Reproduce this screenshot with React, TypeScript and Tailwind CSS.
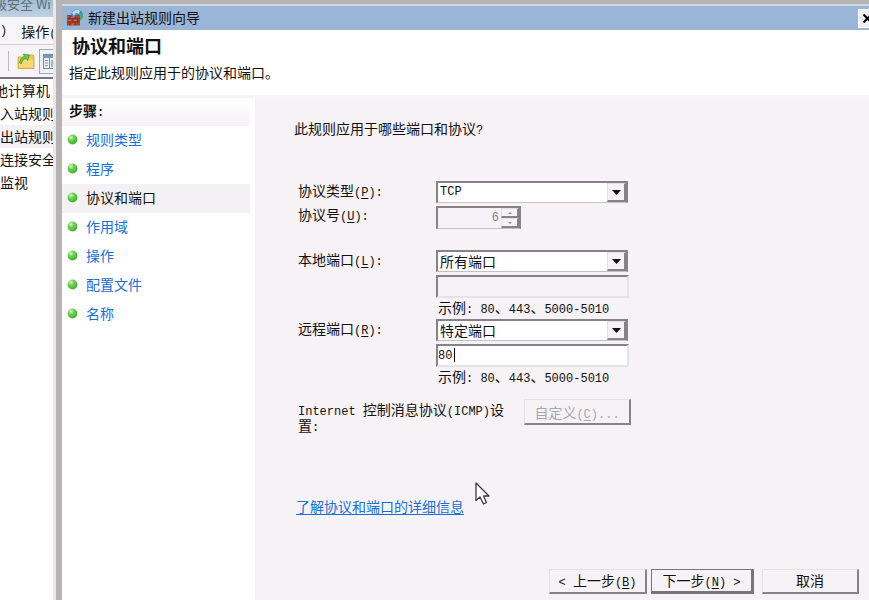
import React from 'react';

function Mono({ children }: { children: React.ReactNode }) {
  return (
    <span className="font-['Liberation_Mono','Noto_Sans_CJK_SC',monospace] text-xs leading-none whitespace-pre">
      {children}
    </span>
  );
}

function Hotkey({ letter, suffix = '' }: { letter: string; suffix?: string }) {
  return (
    <Mono>
      (<u className="underline-offset-2">{letter}</u>){suffix}
    </Mono>
  );
}

const SUNKEN =
  'border-2 border-t-[#858387] border-l-[#858387] border-r-[#e6e2e6] border-b-[#e6e2e6] rounded-none outline-none';
const RAISED =
  'border-t border-l border-r-2 border-b-2 border-t-[#e4e1e4] border-l-[#e4e1e4] border-r-[#858387] border-b-[#858387]';

function Bullet() {
  return (
    <svg width="11" height="11" viewBox="0 0 11 11" aria-hidden="true">
      <defs>
        <radialGradient id="bullet" cx="0.35" cy="0.28" r="0.75">
          <stop offset="0" stopColor="#d8f5cd" />
          <stop offset="0.4" stopColor="#6fd152" />
          <stop offset="1" stopColor="#3fae2c" />
        </radialGradient>
      </defs>
      <circle cx="5.5" cy="5.5" r="4.9" fill="url(#bullet)" />
    </svg>
  );
}

function FirewallIcon() {
  return (
    <svg width="18" height="18" viewBox="0 0 18 18" aria-hidden="true">
      <circle cx="11" cy="6.5" r="6" fill="#3f86cf" />
      <path d="M6 4 C8 0.5 12 0 14 2 L13 5 L10 4 L8 7 Z" fill="#a9e0f2" />
      <path d="M13 4 L16.500 4.500 L16.500 9 L14 11 L12 8 Z" fill="#44b556" />
      <path d="M1 6 H6 V8 H9 V6 H14 V16.500 H1 Z" fill="#b5402e" />
      <path
        d="M1 9.500 H14 M1 13 H14 M4 6 V9.500 M9.500 8 V9.500 M6.500 9.500 V13 M11.500 9.500 V13 M4 13 V16.500 M9 13 V16.500"
        stroke="#70302a"
        strokeWidth="0.8"
        fill="none"
      />
      <path d="M1.500 8 H3 M5 8.500 H8 M2 11.500 H5 M8 11.500 H10.500 M5.500 15 H8" stroke="#d9684d" strokeWidth="1" />
    </svg>
  );
}

function FolderUpIcon() {
  return (
    <svg width="18" height="18" viewBox="0 0 18 18" aria-hidden="true">
      <path d="M1 5 H10 L11.500 3 H16 L17 4 V16.500 H1 Z" fill="#efcb58" stroke="#c9a23a" strokeWidth="0.8" />
      <path d="M2 8 H16 V15.500 H2 Z" fill="#f6da78" />
      <path
        d="M2.500 11 C3 7.500 5 5 7.500 4.500 L6.500 2 L12.500 3 L10.500 8.500 L9 6.500 C6.500 7 5 8.500 4.500 11.500 Z"
        fill="#6cc648"
        stroke="#3f9a26"
        strokeWidth="0.7"
      />
    </svg>
  );
}

function PaneIcon() {
  return (
    <svg width="16" height="17" viewBox="0 0 16 17" aria-hidden="true">
      <rect x="0.5" y="1.500" width="15" height="14" fill="#eef3f8" stroke="#7288a3" />
      <rect x="1" y="2" width="14" height="3" fill="#7f98b6" />
      <path d="M6.500 5 V15" stroke="#7288a3" />
      <path d="M2 7.500 H5 M2 10 H5 M2 12.500 H5" stroke="#7193bd" />
      <rect x="8" y="7" width="6" height="7" fill="#9db7d3" />
    </svg>
  );
}

function ConsoleWindow() {
  const nodes = ['入站规则', '出站规则', '连接安全', '监视'];
  return (
    <section className="flex w-[56px] shrink-0 flex-col overflow-hidden border-r-3 border-[#e9e7e9] bg-white whitespace-nowrap">
      <div className="h-[17px] shrink-0 overflow-hidden bg-linear-to-b from-[#a3bdd2] to-[#bfd2e0]">
        <p className="-ml-1.5 -mt-1 text-[13px] leading-4 text-[#5d6e7d]">级安全 Wi</p>
      </div>
      <nav className="flex h-7 shrink-0 items-center gap-3.5 border-b border-[#cfcbcf] bg-[#f8f5f8]">
        <Mono>)</Mono>
        <button type="button" className="shrink-0">
          操作<Mono>(</Mono>
        </button>
      </nav>
      <div className="flex h-[34px] shrink-0 items-center border-b-2 border-[#77757a] bg-[#f7f4f7]">
        <span className="ml-2 h-5 w-px shrink-0 bg-[#bdb9bd]" />
        <button type="button" aria-label="向上" className="ml-2 shrink-0">
          <FolderUpIcon />
        </button>
        <button type="button" aria-label="显示窗格" className="ml-1 shrink-0 border border-[#a5a9b2] bg-[#eef1f6] p-[3px]">
          <PaneIcon />
        </button>
      </div>
      <ul className="leading-[23px]">
        <li className="-ml-1.5">
          地计算机<span className="ml-[3px]">上</span>
        </li>
        {nodes.map((node) => (
          <li key={node} className={node === '出站规则' ? 'bg-[#f4f1f4]' : ''}>
            {node}
          </li>
        ))}
      </ul>
    </section>
  );
}

const STEPS = ['规则类型', '程序', '协议和端口', '作用域', '操作', '配置文件', '名称'];

function StepList() {
  return (
    <aside className="w-[193px] shrink-0 bg-white pr-[5px]">
      <h2 className="h-7 bg-linear-to-b from-white to-[#f5f2f5] pl-[7px] font-bold leading-6">
        步骤<Mono>:</Mono>
      </h2>
      <ol>
        {STEPS.map((step) => {
          const current = step === '协议和端口';
          return (
            <li
              key={step}
              className={`flex h-[29px] items-start gap-2 pl-[5px] leading-[26px] ${current ? 'bg-[#f4f1f4]' : ''}`}
            >
              <span className="pt-2">
                <Bullet />
              </span>
              {current ? (
                <span aria-current="step">{step}</span>
              ) : (
                <a href="#step" className="text-[#1670d8]">
                  {step}
                </a>
              )}
            </li>
          );
        })}
      </ol>
    </aside>
  );
}

function DropDown({ id, value, latin = false }: { id: string; value: string; latin?: boolean }) {
  return (
    <div className="relative h-[22px] w-48 border-2 border-b border-[#858387] border-b-[#c4c1c4] bg-white">
      <select
        id={id}
        defaultValue={value}
        className={`block h-[18px] w-full appearance-none bg-transparent pl-0.5 leading-[18px] outline-none ${
          latin ? "font-['Liberation_Mono',monospace] text-xs" : 'text-sm'
        }`}
      >
        <option>{value}</option>
      </select>
      <span
        className={`pointer-events-none absolute inset-y-0 right-0 flex w-[19px] items-center justify-center bg-[#f6f3f6] ${RAISED}`}
      >
        <svg width="9" height="5" viewBox="0 0 9 5" aria-hidden="true">
          <path d="M0 0 H9 L4.500 5 Z" fill="#111" />
        </svg>
      </span>
    </div>
  );
}

function PortGroup({
  id,
  name,
  letter,
  choice,
  ports,
}: {
  id: string;
  name: string;
  letter: string;
  choice: string;
  ports?: string;
}) {
  return (
    <div className="flex">
      <label htmlFor={id} className="w-[138px] shrink-0 leading-[18px]">
        {name}
        <Hotkey letter={letter} suffix=":" />
      </label>
      <div>
        <DropDown id={id} value={choice} />
        <div className="relative mt-[3px]">
          <input
            type="text"
            aria-label={`${name}列表`}
            defaultValue={ports}
            disabled={!ports}
            className={`block h-[23px] w-[193px] font-['Liberation_Mono',monospace] text-xs ${SUNKEN} ${
              ports ? 'bg-white' : 'bg-[#f6f2f6]'
            }`}
          />
          {ports && <span className="absolute left-[18px] top-1 h-3.5 w-px bg-black" />}
        </div>
        <p className="h-[21px] pl-0.5 leading-[18px] whitespace-nowrap">
          示例<Mono>: 80</Mono>、<Mono>443</Mono>、<Mono>5000-5010</Mono>
        </p>
      </div>
    </div>
  );
}

function SpinArrow({ up = false }: { up?: boolean }) {
  return (
    <button
      type="button"
      disabled
      aria-label={up ? '增加' : '减少'}
      className={`flex flex-1 items-center justify-center ${RAISED}`}
    >
      <svg width="4" height="2" viewBox="0 0 4 2" aria-hidden="true">
        <path d={up ? 'M0 2 H4 L2 0 Z' : 'M0 0 H4 L2 2 Z'} fill="#8f8c90" />
      </svg>
    </button>
  );
}

function Page() {
  return (
    <main className="flex min-w-0 flex-1 flex-col bg-[#f6f2f6] pl-[39px]">
      <p className="mt-5 leading-5">
        此规则应用于哪些端口和协议<Mono>?</Mono>
      </p>
      <form className="mt-[43px] pl-1">
        <div className="flex">
          <label htmlFor="protocol" className="w-[138px] shrink-0 leading-[18px]">
            协议类型
            <Hotkey letter="P" suffix=":" />
          </label>
          <DropDown id="protocol" value="TCP" latin />
        </div>
        <div className="mt-[3px] flex">
          <label htmlFor="number" className="w-[138px] shrink-0 leading-4">
            协议号
            <Hotkey letter="U" suffix=":" />
          </label>
          <div className="flex h-[23px] w-[85px] border-2 border-b border-[#858387] border-b-[#c4c1c4]">
            <input
              id="number"
              type="number"
              defaultValue={6}
              disabled
              className="min-w-0 flex-1 appearance-none pr-0.5 text-right font-['Liberation_Mono',monospace] text-xs text-[#858286] [appearance:textfield] [&::-webkit-inner-spin-button]:appearance-none"
            />
            <div className="flex w-[18px] flex-col">
              <SpinArrow up />
              <SpinArrow />
            </div>
          </div>
        </div>
        <div className="mt-[21px]">
          <PortGroup id="local" name="本地端口" letter="L" choice="所有端口" />
          <PortGroup id="remote" name="远程端口" letter="R" choice="特定端口" ports="80" />
        </div>
        <div className="mt-[11px] flex">
          <p className="mr-[18px] w-52 shrink-0 pt-[3px] leading-3.5">
            <Mono>Internet </Mono>控制消息协议<Mono>(ICMP)</Mono>设置<Mono>:</Mono>
          </p>
          <button type="button" disabled className={`h-[26px] w-[107px] leading-5 text-[#aaa7ab] ${RAISED}`}>
            自定义
            <Hotkey letter="C" suffix="..." />
          </button>
        </div>
      </form>
      <p className="mt-[62px] pl-0.5 leading-5">
        <a href="#more" className="text-[#1670d8] underline underline-offset-2">
          了解协议和端口的详细信息
        </a>
      </p>
      <footer className="mt-auto flex justify-end pb-1.5 pr-2.5 leading-5">
        <button type="button" className={`h-[25px] w-[98px] pb-0.5 ${RAISED}`}>
          <Mono>&lt; </Mono>上一步
          <Hotkey letter="B" />
        </button>
        <button type="button" className="ml-1 h-[25px] w-[103px] border border-r-3 border-b-3 border-[#77757a] pb-0.5">
          下一步
          <Hotkey letter="N" suffix=" >" />
        </button>
        <button type="button" className={`ml-2 h-[25px] w-[97px] pb-0.5 ${RAISED}`}>
          取消
        </button>
      </footer>
    </main>
  );
}

export default function App() {
  return (
    <div className="relative flex h-screen overflow-hidden bg-white font-['Noto_Sans_CJK_SC','Liberation_Sans',sans-serif] text-sm text-[#111]">
      <ConsoleWindow />
      <section className="flex min-w-0 flex-1 flex-col border-t-4 border-l-6 border-[#b7b3b3]">
        <header className="flex h-[26px] shrink-0 items-center overflow-hidden border-t-2 border-[#ccd7e4] bg-[#9ab5d5] pl-1">
          <FirewallIcon />
          <h1 className="ml-1 pb-0.5 leading-5">新建出站规则向导</h1>
          <button
            type="button"
            aria-label="关闭"
            className="-mr-2 ml-auto flex h-[19px] w-[19px] items-center justify-center border border-white bg-[#f1eef2]"
          >
            <svg width="9" height="9" viewBox="0 0 9 9" aria-hidden="true">
              <path d="M0.500 0.500 L8.500 8.500 M8.500 0.500 L0.500 8.500" stroke="#000" strokeWidth="2" />
            </svg>
          </button>
        </header>
        <div className="h-[68px] shrink-0 border-b-3 border-[#f7f4f7] bg-white pt-[3px]">
          <h2 className="pl-2.5 text-lg font-bold leading-6">协议和端口</h2>
          <p className="mt-[3px] pl-[7px] leading-6">指定此规则应用于的协议和端口。</p>
        </div>
        <div className="flex min-h-0 flex-1">
          <StepList />
          <Page />
        </div>
      </section>
      <svg
        className="pointer-events-none absolute left-[475px] top-[482px]"
        width="16"
        height="24"
        viewBox="0 0 16 24"
        aria-hidden="true"
      >
        <path
          d="M1 1 V18.500 L5 15 L8.500 22 L11.500 20.500 L8.500 14 H14 Z"
          fill="#fff"
          stroke="#3a383c"
          strokeWidth="1.300"
          strokeLinejoin="round"
        />
      </svg>
    </div>
  );
}
